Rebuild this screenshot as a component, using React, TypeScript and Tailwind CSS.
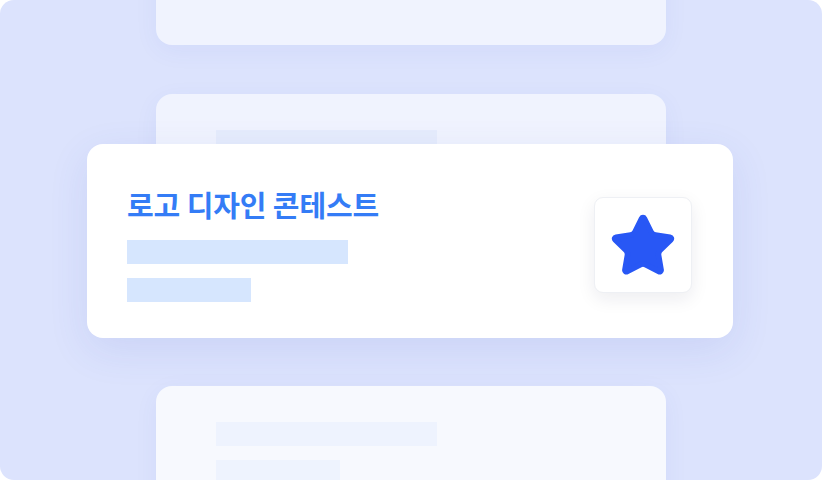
import { Star } from "lucide-react"

export default function App() {
  return (
    <div className="w-[822px] h-[480px] rounded-[14px] bg-[#dce3fd] overflow-hidden flex flex-col items-center" style={{ fontFamily: '"Noto Sans CJK KR", "Noto Sans", sans-serif' }}>
      {/* 위쪽 카드 (잘림) */}
      <div className="w-[510px] h-[100px] mt-[-55px] shrink-0 rounded-2xl bg-[#f0f3fe] shadow-[0_6px_24px_rgba(70,90,200,0.06)]" />

      {/* 뒤 카드 */}
      <div className="w-[510px] h-[100px] mt-[49px] shrink-0 rounded-2xl bg-[#f0f3fe] px-[60px] pt-[36px] shadow-[0_6px_24px_rgba(70,90,200,0.06)]">
        <div className="w-[221px] h-[24px] bg-[#e6ecfc]" />
      </div>

      {/* 메인 카드 */}
      <div className="relative z-10 w-[646px] h-[194px] mt-[-50px] mr-[2px] shrink-0 rounded-2xl bg-white pl-10 pr-[41px] flex items-start justify-between shadow-[0_12px_40px_rgba(60,80,190,0.11)]">
        <div className="flex flex-col pt-[41px]">
          <h1 className="text-[29px] leading-[38px] font-bold text-[#347cf6] tracking-[-0.1px]">로고 디자인 콘테스트</h1>
          <div className="w-[221px] h-[24px] mt-[17px] bg-[#d6e6fe]" />
          <div className="w-[124px] h-[24px] mt-[14px] bg-[#d6e6fe]" />
        </div>
        <div className="w-[98px] h-[96px] mt-[53px] rounded-[9px] bg-white border border-[#eef0f4] shadow-[0_6px_18px_rgba(20,30,60,0.08)] flex items-center justify-center">
          <Star size={68} className="text-[#2857f5] mt-[1px]" fill="currentColor" strokeWidth={2} />
        </div>
      </div>

      {/* 아래 카드 (잘림) */}
      <div className="w-[510px] h-[130px] mt-[48px] shrink-0 rounded-2xl bg-[#f7f9fe] px-[60px] pt-[36px] shadow-[0_6px_24px_rgba(70,90,200,0.06)]">
        <div className="w-[221px] h-[24px] bg-[#eef3fe]" />
        <div className="w-[124px] h-[24px] mt-[14px] bg-[#eef3fe]" />
      </div>
    </div>
  )
}
